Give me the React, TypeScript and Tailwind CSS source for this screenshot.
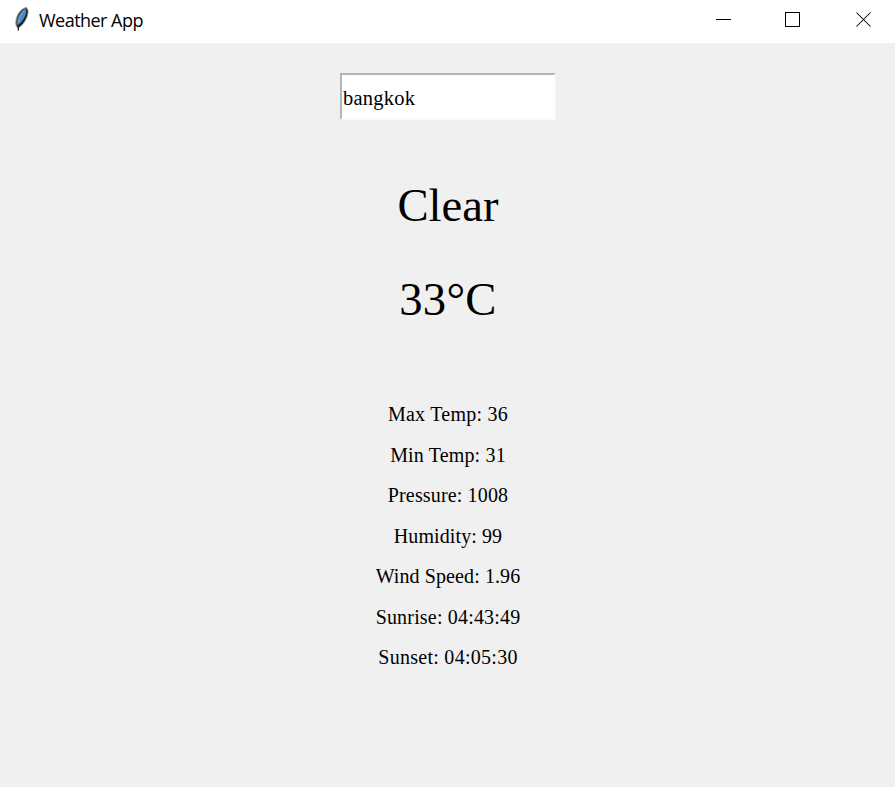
const details = [
  { text: 'Max Temp: 36', spacing: 'tracking-[0.250px]' },
  { text: 'Min Temp: 31', spacing: 'tracking-[0.150px]' },
  { text: 'Pressure: 1008', spacing: 'tracking-[0.150px]' },
  { text: 'Humidity: 99', spacing: 'tracking-[0.100px]' },
  { text: 'Wind Speed: 1.96', spacing: 'tracking-[0.100px]' },
  { text: 'Sunrise: 04:43:49', spacing: 'tracking-[0.180px]' },
  { text: 'Sunset: 04:05:30', spacing: 'tracking-[0.280px]' },
];

function FeatherIcon() {
  return (
    <svg width="20" height="28" viewBox="0 0 20 28" className="shrink-0">
      <path d="M14.500 2.500C10.500 2.800 6.500 7 4.800 12c-1.400 4-1.200 7-.4 9.500L6 23c3.500-1.500 7.500-6.500 9.200-11.500 1-3 1.200-7-.7-9Z" fill="#39424d" stroke="#a3a39b" strokeWidth="1" />
      <path d="M13.500 4C10 5.500 7 10 5.800 14.500c-.5 2-.6 3.500-.3 5C9 18 12 14.500 13.500 10.500c1-2.500 1.300-4.800 0-6.500Z" fill="#4a86cc" />
      <path d="M12 5.500C9.500 8.500 7 13.500 6.400 18" fill="none" stroke="#77aee6" strokeWidth="1" />
      <path d="M15 4.500c.4 4.500-2 9.500-5.500 14L6.300 21.500v4" fill="none" stroke="#15191e" strokeWidth="1.300" />
    </svg>
  );
}

function TitleBar() {
  return (
    <header className="flex h-[43px] shrink-0 items-start bg-white pl-[12px] pt-[5px]">
      <FeatherIcon />
      <h1 className="ml-[7px] mt-[2px] whitespace-nowrap font-['Open_Sans',sans-serif] text-[18px] leading-[26px] tracking-[-0.530px] text-black">
        Weather App
      </h1>
      <div className="ml-auto mr-[23px] mt-[6px] flex">
        <button aria-label="Minimize" className="mr-[54px] block">
          <svg width="15" height="17" viewBox="0 0 15 17" shapeRendering="crispEdges"><path d="M0 8.500h15" stroke="black" /></svg>
        </button>
        <button aria-label="Maximize" className="mr-[54px] block">
          <svg width="17" height="17" viewBox="0 0 17 17" shapeRendering="crispEdges"><path d="M.5 1.500h14v14H.5Z" fill="none" stroke="black" /></svg>
        </button>
        <button aria-label="Close" className="block">
          <svg width="16" height="17" viewBox="0 0 16 17"><path d="m.5 1.500 14 14m0-14-14 14" fill="none" stroke="black" strokeWidth="1.050" /></svg>
        </button>
      </div>
    </header>
  );
}

export default function App() {
  return (
    <div className="flex h-[787px] w-[895px] flex-col overflow-hidden bg-[#f0f0f0] font-['Liberation_Serif',serif] text-black">
      <TitleBar />
      <main className="flex flex-col items-center pl-px pt-[29.500px]">
        <input
          aria-label="City"
          defaultValue="bangkok"
          className="h-[47px] w-[216px] border-2 border-b-[#fafafa] border-l-[#b5b5b5] border-r-[#fafafa] border-t-[#b5b5b5] bg-white pl-[1px] pt-[4px] text-[20.500px] tracking-[0.250px] outline-none"
        />
        <p className="mt-[58.500px] text-[46.700px] leading-[54px]">Clear</p>
        <p className="mt-[40px] text-[46.700px] leading-[54px] tracking-[0.250px]">33°C</p>
        <ul className="mt-[68px] text-center text-[20px]">
          {details.map((item) => (
            <li key={item.text} className={`h-[40.500px] leading-[41px] ${item.spacing}`}>{item.text}</li>
          ))}
        </ul>
      </main>
    </div>
  );
}
